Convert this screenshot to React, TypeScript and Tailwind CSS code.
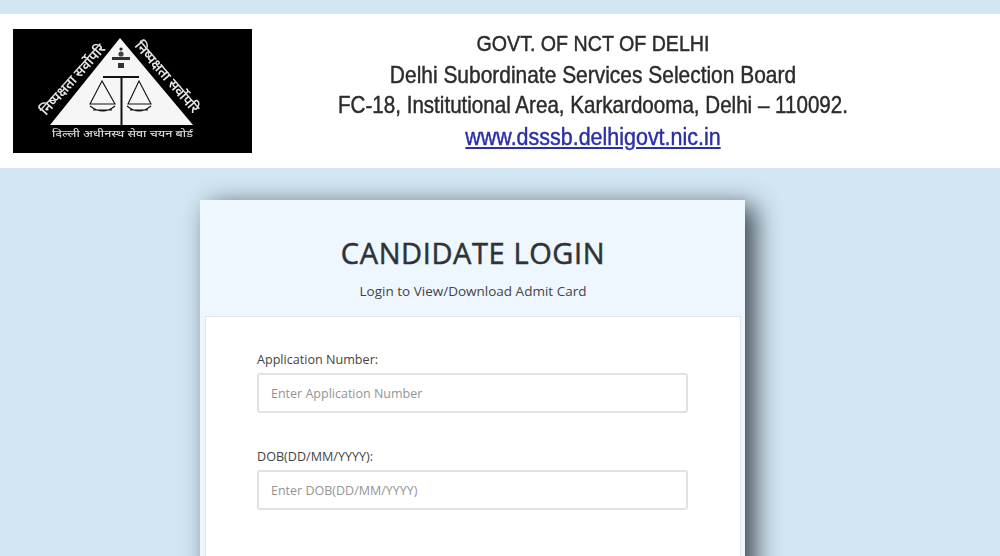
import React from 'react';

const deva = '"Noto Sans","Noto Sans Devanagari",sans-serif';

const Logo = () => (
  <svg viewBox="0 0 239 124" className="w-[239px] h-[124px] shrink-0 bg-black" style={{ filter: 'blur(0.7px)' }}>
    {/* triangle */}
    <path d="M107 9 L180 96 L37 96 Z" fill="#f6f6f6" />
    {/* emblem */}
    <circle cx="108" cy="20" r="1.6" fill="#222" />
    <circle cx="108" cy="25" r="2.6" fill="#444" />
    <rect x="99" y="28" width="18" height="3" fill="#333" />
    <rect x="105" y="34" width="6" height="5" fill="#333" />
    {/* scale */}
    <path d="M90 48 H126 M108.5 48 V96" stroke="#111" strokeWidth="2" fill="none" />
    <path d="M89 52 L77 75 H102 Z M126 52 L115 75 H138 Z" stroke="#111" strokeWidth="1.1" fill="none" />
    <path d="M77 77 Q90 87 102 77 M114 77 Q126 87 138 77 M80 81 H99 M117 81 H135" stroke="#111" strokeWidth="1.1" fill="none" />
    {/* side lettering */}
    <text transform="translate(33 87) rotate(-48)" fill="#e8e8e8" fontSize="14" fontWeight="600" fontFamily={deva} textLength="90" lengthAdjust="spacingAndGlyphs">निष्पक्षता सर्वोपरि</text>
    <text transform="translate(121 17) rotate(49)" fill="#e8e8e8" fontSize="14" fontWeight="600" fontFamily={deva} textLength="90" lengthAdjust="spacingAndGlyphs">निष्पक्षता सर्वोपरि</text>
    <text x="39" y="108" fill="#d8d8d8" fontSize="9.5" fontWeight="500" fontFamily={deva} textLength="141" lengthAdjust="spacingAndGlyphs">दिल्ली अधीनस्थ सेवा चयन बोर्ड</text>
  </svg>
);

const Field = ({ label, placeholder }: { label: string; placeholder: string }) => (
  <div>
    <label className="block text-[12.6px] leading-[18px] text-[#444] mb-[4px]">{label}</label>
    <input
      placeholder={placeholder}
      className="block w-full h-[40px] px-[12px] text-[12.5px] bg-white border-2 border-[#e2e2e2] rounded-[3px] placeholder:text-[#949494] outline-none"
    />
  </div>
);

export default function App() {
  return (
    <div className="h-screen overflow-hidden bg-[#d3e6f3] pt-[14px] font-['Open_Sans',sans-serif]">
      <header className="h-[154px] bg-white flex items-center pl-[13px]">
        <Logo />
        <div className="w-[600px] ml-[41px] mb-[2px] text-center font-['Liberation_Sans',Arial,sans-serif] text-[#2b2b2b] leading-[31px] whitespace-nowrap scale-x-[0.88] blur-[0.4px] [-webkit-text-stroke:0.45px]">
          <div className="text-[22.3px]">GOVT. OF NCT OF DELHI</div>
          <div className="text-[23.8px]">Delhi Subordinate Services Selection Board</div>
          <div className="text-[23.4px]">FC-18, Institutional Area, Karkardooma, Delhi – 110092.</div>
          <div className="text-[24.4px] text-[#2a2fa8] underline">www.dsssb.delhigovt.nic.in</div>
        </div>
      </header>

      <main className="mt-[32px] ml-[200px] w-[545px] bg-[#eef7ff] shadow-[10px_6px_24px_rgba(20,30,40,0.8)] pl-[5px] pr-[4px]">
        <div className="h-[116px] pt-[34px] text-center">
          <h1 className="text-[29px] leading-[38px] font-medium tracking-[0.6px] text-[#303235] [-webkit-text-stroke:0.5px]">CANDIDATE LOGIN</h1>
          <p className="mt-[10px] text-[13.5px] leading-[18px] text-[#444]">Login to View/Download Admit Card</p>
        </div>
        <div className="bg-white border border-[#e4e4e4] h-[400px] pt-[34px] pl-[51px] pr-[52px] flex flex-col gap-[35px]">
          <Field label="Application Number:" placeholder="Enter Application Number" />
          <Field label="DOB(DD/MM/YYYY):" placeholder="Enter DOB(DD/MM/YYYY)" />
        </div>
      </main>
    </div>
  );
}
